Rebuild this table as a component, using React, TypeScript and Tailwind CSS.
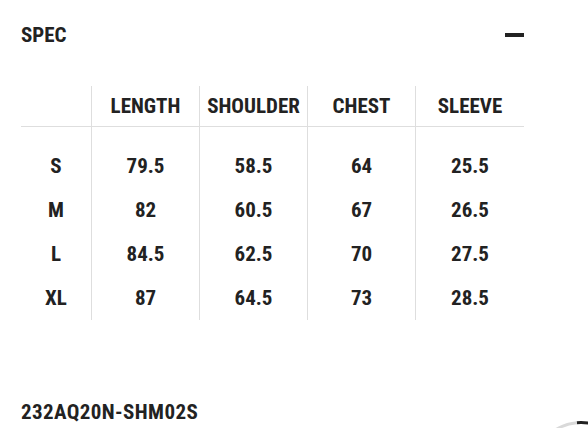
import React from "react";

const cols = ["LENGTH", "SHOULDER", "CHEST", "SLEEVE"];
const rows: [string, string[]][] = [
  ["S", ["79.5", "58.5", "64", "25.5"]],
  ["M", ["82", "60.5", "67", "26.5"]],
  ["L", ["84.5", "62.5", "70", "27.5"]],
  ["XL", ["87", "64.5", "73", "28.5"]],
];

export default function App() {
  return (
    <div className="relative w-[588px] h-[428px] overflow-hidden bg-white text-[#222] font-bold font-['Roboto',sans-serif] font-stretch-condensed">
      <div className="flex items-center justify-between pl-[21px] pr-[64px] pt-[23px]">
        <span className="text-[21px] leading-6">SPEC</span>
        <span className="block w-[19px] h-[4px] bg-[#222]" />
      </div>

      <div className="mx-[21px] mt-[39px] w-[503px] grid grid-cols-[70px_108px_108px_108px_109px] text-[21px] leading-6 text-center">
        <div className="h-[41px] border-b border-[#dedede]" />
        {cols.map((c) => (
          <div key={c} className="h-[41px] flex items-center justify-center border-b border-l border-[#dedede]">
            {c}
          </div>
        ))}

        {rows.map(([size, vals], i) => (
          <React.Fragment key={size}>
            <div className={`flex items-end justify-center ${i === 0 ? "h-[61px]" : "h-[44px]"} pb-[10px]`}>{size}</div>
            {vals.map((v, j) => (
              <div
                key={j}
                className={`flex items-end justify-center border-l border-[#dedede] ${i === 0 ? "h-[61px]" : "h-[44px]"} pb-[10px]`}
              >
                {v}
              </div>
            ))}
          </React.Fragment>
        ))}
      </div>

      <div className="pl-[21px] mt-[80px] text-[21px] leading-6 tracking-[0.4px]">232AQ20N-SHM02S</div>

      <div className="absolute left-[531px] top-[421px] w-[100px] h-[100px] rounded-full border-[3px] border-[#d9d9d9] border-t-[#222] rotate-[40deg]" />
    </div>
  );
}
